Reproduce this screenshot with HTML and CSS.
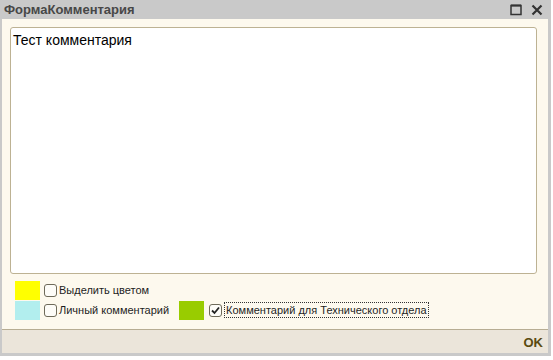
FILE: index.html
```html
<!DOCTYPE html>
<html lang="ru">
<head>
    <meta charset="UTF-8">
    <meta name="viewport" content="width=device-width, initial-scale=1.0">
    <title>ФормаКомментария</title>
    <link rel="stylesheet" href="styles.css">
</head>
<body>
    <div class="window">
        <div class="titlebar">
            <span class="title">ФормаКомментария</span>
            <div class="controls">
                <svg class="ctl" width="12" height="12" viewBox="0 0 12 12">
                    <rect x="1" y="1.5" width="10" height="9" fill="none" stroke="#333" stroke-width="1.5"/>
                    <line x1="1" y1="1.5" x2="11" y2="1.5" stroke="#333" stroke-width="2"/>
                </svg>
                <svg class="ctl" width="12" height="12" viewBox="0 0 12 12">
                    <path d="M1.5 1.5 L10.5 10.5 M10.5 1.5 L1.5 10.5" stroke="#333" stroke-width="2.2" fill="none"/>
                </svg>
            </div>
        </div>

        <div class="content">
            <div class="memo">Тест комментария</div>
            <div class="options">
                <div class="row">
                    <span class="swatch yellow"></span>
                    <label class="check"><span class="box"></span>Выделить цветом</label>
                </div>
                <div class="row">
                    <span class="swatch cyan"></span>
                    <label class="check"><span class="box"></span>Личный комментарий</label>
                    <span class="swatch green"></span>
                    <label class="check checked">
                        <span class="box">
                            <svg width="9" height="9" viewBox="0 0 9 9"><path d="M1 4.5 L3.5 7 L8 1.5" stroke="#222" stroke-width="1.8" fill="none"/></svg>
                        </span>
                        <span class="focus">Комментарий для Технического отдела</span>
                    </label>
                </div>
            </div>
        </div>

        <div class="footer">
            <button class="ok">OK</button>
        </div>
    </div>
</body>
</html>
```

FILE: styles.css
```css
body {
    margin: 0;
    background: #fff;
    font-family: "Liberation Sans", Arial, sans-serif;
    overflow: hidden;
}

.window {
    width: 551px;
    height: 356px;
    background: #c9c9c9;
    display: flex;
    flex-direction: column;
    box-sizing: border-box;
    padding-bottom: 3px;
}

.titlebar {
    height: 19px;
    display: flex;
    align-items: center;
    justify-content: space-between;
    padding: 0 8px 0 4px;
}

.title {
    font-size: 13px;
    font-weight: bold;
    color: #474747;
}

.controls {
    display: flex;
    gap: 9px;
    align-items: center;
}

.ctl {
    display: block;
}

.content {
    margin: 0 3px 0 2px;
    background: #fdf9ee;
    padding: 8px 11px 9px 8px;
    border-bottom: 1px solid #b7ad93;
}

.memo {
    height: 247px;
    box-sizing: border-box;
    background: #fff;
    border: 1px solid #bdb293;
    border-radius: 3px;
    padding: 4px 2px;
    font-size: 14px;
    color: #000;
}

.options {
    margin-top: 6px;
    padding-left: 5px;
}

.row {
    display: flex;
    align-items: center;
    height: 20px;
}

.swatch {
    width: 25px;
    height: 19px;
    margin-right: 4px;
}

.yellow { background: #ffff00; }
.cyan { background: #b2eeee; }
.green {
    background: #99cc00;
    margin-left: 10px;
    margin-right: 5px;
}

.check {
    display: flex;
    align-items: center;
    font-size: 11px;
    color: #1e1e1e;
}

.box {
    width: 13px;
    height: 13px;
    box-sizing: border-box;
    border: 1px solid #6e6a5a;
    border-radius: 3px;
    background: #fdfcf8;
    margin-right: 2px;
    display: flex;
    align-items: center;
    justify-content: center;
}

.focus {
    border: 1px dotted #333;
    padding: 1px 1px;
}

.footer {
    margin: 0 3px 0 2px;
    flex: 1;
    background: #ebe5da;
    display: flex;
    align-items: center;
    justify-content: flex-end;
    padding-right: 5px;
}

.ok {
    background: none;
    border: none;
    padding: 0;
    font-family: "Liberation Sans", Arial, sans-serif;
    font-size: 13px;
    font-weight: bold;
    color: #5a4a10;
    margin-top: 2px;
}
```
